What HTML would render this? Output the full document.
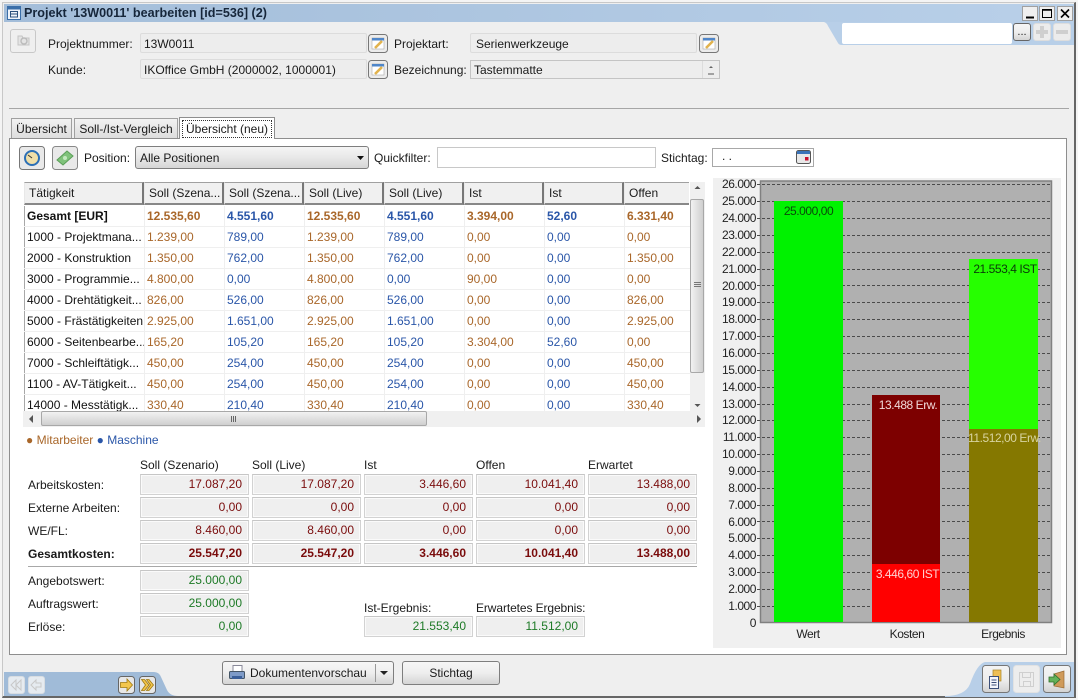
<!DOCTYPE html>
<html><head><meta charset="utf-8"><style>
html,body{margin:0;padding:0}
body{width:1078px;height:700px;overflow:hidden;position:relative;background:#efefef;font:12px "Liberation Sans",sans-serif;color:#1a1a1a}
.a,.l,.f,.b,.h,.e{position:absolute}
.l{white-space:nowrap;line-height:14px}
.f{box-sizing:border-box;background:#efefef;border:1px solid #d2d2d2;border-top-color:#c6c6c6;box-shadow:0 0 0 1px #fafafa inset;text-align:right;padding-right:6px;line-height:19px;color:#7a0c0c;white-space:nowrap}
.g{color:#1d7a26}
.bd{font-weight:bold}
.b{box-sizing:border-box;border:1px solid #7e7e7e;border-radius:3px;background:linear-gradient(#f6f6f6,#eee 50%,#d4d4d4)}
.h{box-sizing:border-box;height:23px;top:182px;background:#f0f0f0;border:1px solid #8a8a8a;border-width:1px 2px 2px 1px;border-color:#a0a0a0 #777 #888 #e8e8e8;line-height:20px;padding-left:4px;white-space:nowrap}
.e{box-sizing:border-box;background:#efefef;border:1px solid #c9c9c9}
table{border-collapse:collapse;table-layout:fixed;position:absolute}
td{height:20px;padding:0 0 0 2px;border:1px solid #efefef;border-width:0 1px 1px 0;white-space:nowrap;overflow:hidden;line-height:20px}
td:first-child{color:#111;border-left:1px solid #a8a8a8}
td.u{color:#2a56a8}
td.w{color:#a9672a}
tr.t td{font-weight:bold}
tr.t td:first-child{color:#111}
svg{display:block}
</style></head><body>

<div class="a" style="left:0;top:0;width:1078px;height:700px;background:#f4f4f4"></div>
<div class="a" style="left:2px;top:2px;right:2px;bottom:2px;background:#efefef;border:1px solid #c8c8c8;border-right:2px solid #666;border-bottom:2px solid #666;box-sizing:border-box"></div>

<!-- title -->
<div class="a" style="left:4px;top:4px;width:1070px;height:18px;background:linear-gradient(90deg,#a3bdd9,#b9d0e9)"></div>
<div class="a" style="left:842px;top:22px;width:232px;height:23px;background:#b8cfe8"></div>
<svg class="a" style="left:812px;top:22px" width="30" height="23"><path d="M10 0H12Q15 1 16 4L26 21Q27 23 30 23V0Z" fill="#b8cfe8"/></svg>
<svg class="a" style="left:7px;top:6px" width="15" height="15"><rect x="0.5" y="0.5" width="13" height="13" fill="#eef3fa" stroke="#3a6ea8"/><rect x="1" y="1" width="12" height="2.5" fill="#3a6ea8"/><rect x="3.5" y="5.5" width="7" height="5.5" fill="none" stroke="#2a4f7c"/><path d="M4 8H10" stroke="#2a4f7c"/></svg>
<div class="l bd" style="left:24px;top:6px;font-size:12.6px;color:#16263a">Projekt '13W0011' bearbeiten [id=536] (2)</div>

<svg class="a" style="left:1022px;top:6px" width="51" height="15"><rect x=".5" y=".5" width="15" height="14" fill="#efefef" stroke="#a0a0a0"/><rect x="17.500" y=".5" width="15" height="14" fill="#efefef" stroke="#a0a0a0"/><rect x="35.500" y=".5" width="15" height="14" fill="#efefef" stroke="#a0a0a0"/><path d="M4 11.500H12" stroke="#000" stroke-width="2"/><rect x="20.500" y="3.500" width="9" height="8" fill="none" stroke="#000"/><path d="M20 4H30" stroke="#000" stroke-width="1.500"/><path d="M39 3.500L47 11.500M47 3.500L39 11.500" stroke="#000" stroke-width="1.600"/></svg>

<div class="a" style="left:842px;top:23px;width:170px;height:21px;background:#fff;border-radius:2px"></div>
<div class="b" style="left:1013px;top:23px;width:18px;height:18px;text-align:center;font-size:11px;line-height:17px;color:#222;border-color:#666">...</div>
<div class="b" style="left:1033px;top:23px;width:18px;height:18px;background:#ececec;border-color:#ddd"></div>
<div class="b" style="left:1053px;top:23px;width:18px;height:18px;background:#ececec;border-color:#ddd"></div>
<div class="a" style="left:1036px;top:30px;width:12px;height:4px;background:#cfcfcf"></div>
<div class="a" style="left:1040px;top:26px;width:4px;height:12px;background:#cfcfcf"></div>
<div class="a" style="left:1056px;top:30px;width:12px;height:4px;background:#cfcfcf"></div>

<!-- header -->
<div class="a" style="box-sizing:border-box;left:10px;top:29px;width:26px;height:24px;border:1px solid #c8c8c8;border-radius:3px;background:#efefef"></div>
<svg class="a" style="left:16px;top:33px" width="15" height="15"><path d="M2 3H6L7 5H13V12H2Z" fill="#e4e4e4" stroke="#c4c4c4"/><circle cx="8" cy="8" r="3" fill="none" stroke="#bbb" stroke-width="1.400"/></svg>
<div class="l" style="left:48px;top:37px">Projektnummer:</div>
<div class="l" style="left:48px;top:63px">Kunde:</div>
<div class="l" style="left:394px;top:37px">Projektart:</div>
<div class="l" style="left:394px;top:63px">Bezeichnung:</div>
<div class="a" style="box-sizing:border-box;left:140px;top:33px;width:227px;height:20px;background:#ededed;border:1px solid #dcdcdc;border-radius:2px;padding-left:3px;line-height:20px">13W0011</div>
<div class="a" style="box-sizing:border-box;left:140px;top:59px;width:227px;height:20px;background:#ededed;border:1px solid #dcdcdc;border-radius:2px;padding-left:3px;line-height:20px">IKOffice GmbH (2000002, 1000001)</div>
<div class="a" style="box-sizing:border-box;left:470px;top:33px;width:227px;height:20px;background:#ededed;border:1px solid #dcdcdc;border-radius:2px;padding-left:5px;line-height:20px">Serienwerkzeuge</div>
<div class="a" style="box-sizing:border-box;left:470px;top:60px;width:250px;height:19px;background:#ededed;border:1px solid #c4c4c4;padding-left:3px;line-height:19px">Tastemmatte</div>
<div class="a" style="left:702px;top:61px;width:1px;height:17px;background:#dcdcdc"></div>
<svg class="a" style="left:705px;top:64px" width="12" height="13"><path d="M4 4L6 2L8 4Z" fill="#666"/><path d="M3 10H9" stroke="#888" stroke-width="1.500"/></svg>

<svg class="a" style="left:368px;top:34px" width="20" height="20"><rect x=".5" y=".5" width="19" height="18" rx="3" fill="#ececec" stroke="#777"/><rect x="4" y="4" width="12" height="11" fill="#fff" stroke="#aaa" stroke-width=".6"/><rect x="4" y="4" width="12" height="2.500" fill="#4f86c9"/><path d="M7 14L14 7" stroke="#e2b34e" stroke-width="2.600"/></svg>
<svg class="a" style="left:368px;top:60px" width="20" height="20"><rect x=".5" y=".5" width="19" height="18" rx="3" fill="#ececec" stroke="#777"/><rect x="4" y="4" width="12" height="11" fill="#fff" stroke="#aaa" stroke-width=".6"/><rect x="4" y="4" width="12" height="2.500" fill="#4f86c9"/><path d="M7 14L14 7" stroke="#e2b34e" stroke-width="2.600"/></svg>
<svg class="a" style="left:699px;top:34px" width="20" height="20"><rect x=".5" y=".5" width="19" height="18" rx="3" fill="#ececec" stroke="#777"/><rect x="4" y="4" width="12" height="11" fill="#fff" stroke="#aaa" stroke-width=".6"/><rect x="4" y="4" width="12" height="2.500" fill="#4f86c9"/><path d="M7 14L14 7" stroke="#e2b34e" stroke-width="2.600"/></svg>

<div class="a" style="left:9px;top:108px;width:1060px;height:1px;background:#a6a6a6"></div>

<!-- tabs -->
<div class="a" style="box-sizing:border-box;left:11px;top:118px;width:61px;height:21px;background:linear-gradient(#f2f2f2,#dcdcdc);border:1px solid #a0a0a0;border-bottom:0;text-align:center;line-height:21px">Übersicht</div>
<div class="a" style="box-sizing:border-box;left:74px;top:118px;width:104px;height:21px;background:linear-gradient(#f2f2f2,#dcdcdc);border:1px solid #a0a0a0;border-bottom:0;text-align:center;line-height:21px">Soll-/Ist-Vergleich</div>
<div class="a" style="box-sizing:border-box;left:9px;top:138px;width:1058px;height:517px;background:#fff;border:1px solid #8e8e8e"></div>
<div class="a" style="box-sizing:border-box;left:179px;top:117px;width:96px;height:22px;background:#fff;border:1px solid #8e8e8e;border-bottom:0;padding:2px"><div style="box-sizing:border-box;height:18px;border:1px dotted #333;text-align:center;line-height:16px">Übersicht (neu)</div></div>

<!-- toolbar -->
<svg class="a" style="left:19px;top:146px" width="26" height="24"><rect x=".5" y=".5" width="25" height="23" rx="3" fill="#e9e9e9" stroke="#777"/><circle cx="13" cy="12" r="7" fill="#f0dfa8" stroke="#2c6fb5" stroke-width="2"/><path d="M13 12L9 9" stroke="#333"/></svg>
<svg class="a" style="left:52px;top:146px" width="26" height="24"><rect x=".5" y=".5" width="25" height="23" rx="3" fill="#e9e9e9" stroke="#888"/><path d="M5 14L15 5L21 10L11 19Z" fill="#7fc27a" stroke="#5a9e58"/><circle cx="13" cy="12" r="2" fill="#c4e8bf"/></svg>
<div class="l" style="left:84px;top:151px">Position:</div>
<div class="b" style="left:135px;top:146px;width:234px;height:23px;line-height:22px;padding-left:4px;background:linear-gradient(#f5f5f5,#e8e8e8 50%,#d6d6d6)">Alle Positionen</div>
<svg class="a" style="left:356px;top:155px" width="9" height="6"><path d="M1 1H8L4.500 5Z" fill="#111"/></svg>
<div class="l" style="left:374px;top:151px">Quickfilter:</div>
<div class="a" style="box-sizing:border-box;left:437px;top:147px;width:219px;height:21px;background:#fff;border:1px solid #c8c8c8"></div>
<div class="l" style="left:661px;top:151px">Stichtag:</div>
<div class="a" style="box-sizing:border-box;left:712px;top:148px;width:102px;height:19px;background:#fff;border:1px solid #a8a8a8;padding-left:9px;line-height:15px">. .</div>
<svg class="a" style="left:796px;top:150px" width="16" height="15"><rect x=".5" y=".5" width="14" height="13" rx="2" fill="#e8e8e8" stroke="#555"/><rect x="1" y="1" width="13" height="3" fill="#3a73b8"/><rect x="9" y="7" width="3.500" height="3.500" fill="#c8102e"/></svg>

<!-- table -->
<div class="a" style="left:24px;top:181px;width:666px;height:230px;background:#fff;overflow:hidden">
<table style="left:0;top:25px;width:666px">
<colgroup><col style="width:120px"><col style="width:80px"><col style="width:80px"><col style="width:80px"><col style="width:80px"><col style="width:80px"><col style="width:80px"><col style="width:66px"></colgroup>
<tr class="t"><td>Gesamt [EUR]</td><td class="w">12.535,60</td><td class="u">4.551,60</td><td class="w">12.535,60</td><td class="u">4.551,60</td><td class="w">3.394,00</td><td class="u">52,60</td><td class="w">6.331,40</td></tr>
<tr><td>1000 - Projektmana...</td><td class="w">1.239,00</td><td class="u">789,00</td><td class="w">1.239,00</td><td class="u">789,00</td><td class="w">0,00</td><td class="u">0,00</td><td class="w">0,00</td></tr>
<tr><td>2000 - Konstruktion</td><td class="w">1.350,00</td><td class="u">762,00</td><td class="w">1.350,00</td><td class="u">762,00</td><td class="w">0,00</td><td class="u">0,00</td><td class="w">1.350,00</td></tr>
<tr><td>3000 - Programmie...</td><td class="w">4.800,00</td><td class="u">0,00</td><td class="w">4.800,00</td><td class="u">0,00</td><td class="w">90,00</td><td class="u">0,00</td><td class="w">0,00</td></tr>
<tr><td>4000 - Drehtätigkeit...</td><td class="w">826,00</td><td class="u">526,00</td><td class="w">826,00</td><td class="u">526,00</td><td class="w">0,00</td><td class="u">0,00</td><td class="w">826,00</td></tr>
<tr><td>5000 - Frästätigkeiten</td><td class="w">2.925,00</td><td class="u">1.651,00</td><td class="w">2.925,00</td><td class="u">1.651,00</td><td class="w">0,00</td><td class="u">0,00</td><td class="w">2.925,00</td></tr>
<tr><td>6000 - Seitenbearbe...</td><td class="w">165,20</td><td class="u">105,20</td><td class="w">165,20</td><td class="u">105,20</td><td class="w">3.304,00</td><td class="u">52,60</td><td class="w">0,00</td></tr>
<tr><td>7000 - Schleiftätigk...</td><td class="w">450,00</td><td class="u">254,00</td><td class="w">450,00</td><td class="u">254,00</td><td class="w">0,00</td><td class="u">0,00</td><td class="w">450,00</td></tr>
<tr><td>1100 - AV-Tätigkeit...</td><td class="w">450,00</td><td class="u">254,00</td><td class="w">450,00</td><td class="u">254,00</td><td class="w">0,00</td><td class="u">0,00</td><td class="w">450,00</td></tr>
<tr><td>14000 - Messtätigk...</td><td class="w">330,40</td><td class="u">210,40</td><td class="w">330,40</td><td class="u">210,40</td><td class="w">0,00</td><td class="u">0,00</td><td class="w">330,40</td></tr>
</table>
</div>
<div class="h" style="left:24px;width:120px">Tätigkeit</div>
<div class="h" style="left:144px;width:80px">Soll (Szena...</div>
<div class="h" style="left:224px;width:80px">Soll (Szena...</div>
<div class="h" style="left:304px;width:80px">Soll (Live)</div>
<div class="h" style="left:384px;width:80px">Soll (Live)</div>
<div class="h" style="left:464px;width:80px">Ist</div>
<div class="h" style="left:544px;width:80px">Ist</div>
<div class="h" style="left:624px;width:65px;border-right:0">Offen</div>

<!-- scrollbars -->
<div class="a" style="left:690px;top:182px;width:15px;height:229px;background:#f0f0f0"></div>
<div class="a" style="box-sizing:border-box;left:690px;top:199px;width:14px;height:174px;background:linear-gradient(90deg,#f2f2f2,#cfcfcf);border:1px solid #a8a8a8;border-radius:2px"></div>
<svg class="a" style="left:690px;top:182px" width="15" height="229"><path d="M4.500 7L7.500 4L10.500 7Z" fill="#555"/><path d="M4.500 222L7.500 225L10.500 222Z" fill="#555"/><path d="M4 100.500H11M4 102.500H11M4 104.500H11" stroke="#777"/></svg>
<div class="a" style="left:23px;top:411px;width:682px;height:16px;background:#f0f0f0"></div>
<div class="a" style="box-sizing:border-box;left:41px;top:411px;width:386px;height:15px;background:linear-gradient(#f2f2f2,#cfcfcf);border:1px solid #a8a8a8;border-radius:2px"></div>
<svg class="a" style="left:23px;top:411px" width="682" height="16"><path d="M10 4L6 8L10 12Z" fill="#555"/><path d="M674 4L678 8L674 12Z" fill="#555"/><path d="M208.500 5V11M210.500 5V11M212.500 5V11" stroke="#666"/></svg>

<div class="l" style="left:26px;top:433px;color:#a9672a">● Mitarbeiter <span style="color:#2a56a8">● Maschine</span></div>

<!-- cost grid -->
<div class="l" style="left:140px;top:458px">Soll (Szenario)</div>
<div class="l" style="left:252px;top:458px">Soll (Live)</div>
<div class="l" style="left:364px;top:458px">Ist</div>
<div class="l" style="left:476px;top:458px">Offen</div>
<div class="l" style="left:588px;top:458px">Erwartet</div>

<div class="l" style="left:28px;top:478px">Arbeitskosten:</div>
<div class="l" style="left:28px;top:501px">Externe Arbeiten:</div>
<div class="l" style="left:28px;top:524px">WE/FL:</div>
<div class="l bd" style="left:28px;top:547px">Gesamtkosten:</div>

<div class="f" style="left:140px;top:474px;width:109px;height:21px">17.087,20</div>
<div class="f" style="left:252px;top:474px;width:109px;height:21px">17.087,20</div>
<div class="f" style="left:364px;top:474px;width:109px;height:21px">3.446,60</div>
<div class="f" style="left:476px;top:474px;width:109px;height:21px">10.041,40</div>
<div class="f" style="left:588px;top:474px;width:109px;height:21px">13.488,00</div>

<div class="f" style="left:140px;top:497px;width:109px;height:21px">0,00</div>
<div class="f" style="left:252px;top:497px;width:109px;height:21px">0,00</div>
<div class="f" style="left:364px;top:497px;width:109px;height:21px">0,00</div>
<div class="f" style="left:476px;top:497px;width:109px;height:21px">0,00</div>
<div class="f" style="left:588px;top:497px;width:109px;height:21px">0,00</div>

<div class="f" style="left:140px;top:520px;width:109px;height:21px">8.460,00</div>
<div class="f" style="left:252px;top:520px;width:109px;height:21px">8.460,00</div>
<div class="f" style="left:364px;top:520px;width:109px;height:21px">0,00</div>
<div class="f" style="left:476px;top:520px;width:109px;height:21px">0,00</div>
<div class="f" style="left:588px;top:520px;width:109px;height:21px">0,00</div>

<div class="f bd" style="left:140px;top:543px;width:109px;height:21px">25.547,20</div>
<div class="f bd" style="left:252px;top:543px;width:109px;height:21px">25.547,20</div>
<div class="f bd" style="left:364px;top:543px;width:109px;height:21px">3.446,60</div>
<div class="f bd" style="left:476px;top:543px;width:109px;height:21px">10.041,40</div>
<div class="f bd" style="left:588px;top:543px;width:109px;height:21px">13.488,00</div>

<div class="a" style="left:28px;top:566px;width:669px;height:1px;background:#a8a8a8"></div>

<div class="l" style="left:28px;top:574px">Angebotswert:</div>
<div class="l" style="left:28px;top:597px">Auftragswert:</div>
<div class="l" style="left:28px;top:620px">Erlöse:</div>
<div class="f g" style="left:140px;top:570px;width:109px;height:21px">25.000,00</div>
<div class="f g" style="left:140px;top:593px;width:109px;height:21px">25.000,00</div>
<div class="f g" style="left:140px;top:616px;width:109px;height:21px">0,00</div>
<div class="l" style="left:364px;top:601px">Ist-Ergebnis:</div>
<div class="l" style="left:476px;top:601px;letter-spacing:-.1px">Erwartetes Ergebnis:</div>
<div class="f g" style="left:364px;top:616px;width:109px;height:21px">21.553,40</div>
<div class="f g" style="left:476px;top:616px;width:109px;height:21px">11.512,00</div>

<!-- chart -->
<svg class="a" style="left:713px;top:178px" width="348" height="470" font-family="Liberation Sans" font-size="12">
<rect width="348" height="470" fill="#f0f0f0"/>
<rect x="47.500" y="3" width="291" height="441.500" fill="#b0b0b0" stroke="#808080" stroke-width="1.500"/>
<g stroke="#4a4a4a" stroke-dasharray="3 2" stroke-width="1">
<path d="M44 6.500H338M44 23.500H338M44 40.500H338M44 57.500H338M44 74.500H338M44 91.500H338M44 107.500H338M44 124.500H338M44 141.500H338M44 158.500H338M44 175.500H338M44 192.500H338M44 209.500H338M44 226.500H338M44 242.500H338M44 259.500H338M44 276.500H338M44 293.500H338M44 310.500H338M44 327.500H338M44 343.500H338M44 360.500H338M44 377.500H338M44 394.500H338M44 411.500H338M44 428.500H338"/>
</g>
<rect x="61" y="23" width="69" height="421" fill="#00f200"/>
<rect x="159" y="217" width="68" height="169" fill="#7d0000"/>
<rect x="159" y="386" width="68" height="58" fill="#ff0000"/>
<rect x="256" y="81" width="69" height="170" fill="#26ff00"/>
<rect x="256" y="251" width="69" height="193" fill="#857800"/>
<g text-anchor="end" fill="#222" letter-spacing="-.45">
<text x="43" y="10">26.000</text><text x="43" y="27">25.000</text><text x="43" y="44">24.000</text><text x="43" y="61">23.000</text><text x="43" y="78">22.000</text><text x="43" y="95">21.000</text><text x="43" y="112">20.000</text><text x="43" y="128">19.000</text><text x="43" y="145">18.000</text><text x="43" y="162">17.000</text><text x="43" y="179">16.000</text><text x="43" y="196">15.000</text><text x="43" y="213">14.000</text><text x="43" y="230">13.000</text><text x="43" y="246">12.000</text><text x="43" y="263">11.000</text><text x="43" y="280">10.000</text><text x="43" y="297">9.000</text><text x="43" y="314">8.000</text><text x="43" y="331">7.000</text><text x="43" y="348">6.000</text><text x="43" y="364">5.000</text><text x="43" y="381">4.000</text><text x="43" y="398">3.000</text><text x="43" y="415">2.000</text><text x="43" y="432">1.000</text><text x="43" y="449">0</text>
</g>
<g text-anchor="middle" fill="#222" letter-spacing="-.45">
<text x="95" y="460">Wert</text><text x="194" y="460">Kosten</text><text x="290" y="460">Ergebnis</text>
<text x="95.500" y="37" fill="#0a4a0a">25.000,00</text>
<text x="195" y="231" fill="#f0d8d8">13.488 Erw.</text>
<text x="194.500" y="400" fill="#ffd0d0">3.446,60 IST</text>
<text x="292" y="95" fill="#0a3a0a">21.553,4 IST</text>
<text x="291.500" y="264" fill="#d8d4a0">11.512,00 Erw.</text>
</g>
</svg>

<!-- bottom left tab -->
<svg class="a" style="left:4px;top:672px" width="174" height="25"><path d="M0 0H150Q155 0 157 5L163 18Q166 24 174 24H0Z" fill="#a0bbd8"/></svg>
<div class="a" style="box-sizing:border-box;left:8px;top:676px;width:17px;height:18px;background:#e6ebf0;border:1px solid #d8dde2;border-radius:3px"></div>
<div class="a" style="box-sizing:border-box;left:28px;top:676px;width:17px;height:18px;background:#e6ebf0;border:1px solid #d8dde2;border-radius:3px"></div>
<svg class="a" style="left:8px;top:676px" width="150" height="18"><path d="M8 4L3 9L8 14ZM13 4L8 9L13 14Z" fill="none" stroke="#c8c8c8"/><path d="M28 4L23 9L28 14V11H33V7H28Z" fill="none" stroke="#c8c8c8"/><rect x="110.500" y=".5" width="16" height="17" rx="3" fill="#e7e7e7" stroke="#666"/><rect x="131.500" y=".5" width="16" height="17" rx="3" fill="#e7e7e7" stroke="#666"/><path d="M112.500 6.500H119V3L124.500 9L119 15V11.500H112.500Z" fill="#f3c64c" stroke="#a07a10" stroke-width=".8"/><path d="M133.500 3.500H136.500L141 9L136.500 14.500H133.500L137.500 9Z" fill="#f3c64c" stroke="#a07a10" stroke-width=".8"/><path d="M138.500 3.500H141L145.500 9L141 14.500H138.500L142.500 9Z" fill="#f3c64c" stroke="#a07a10" stroke-width=".8"/></svg>

<!-- bottom buttons -->
<div class="b" style="left:222px;top:661px;width:172px;height:24px;line-height:22px;padding-left:27px">Dokumentenvorschau</div>
<svg class="a" style="left:228px;top:664px" width="18" height="18"><rect x="5" y="1.500" width="9" height="6" fill="#fff" stroke="#889"/><rect x="1.500" y="7.500" width="15" height="7" rx="1" fill="#7e9bc8" stroke="#456"/><rect x="4" y="12" width="10" height="3" fill="#3b5f99"/></svg>
<div class="a" style="left:375px;top:664px;width:1px;height:18px;background:#999"></div>
<svg class="a" style="left:379px;top:670px" width="10" height="6"><path d="M1 1H9L5 5Z" fill="#222"/></svg>
<div class="b" style="left:402px;top:661px;width:98px;height:24px;text-align:center;line-height:22px">Stichtag</div>

<!-- bottom right tab -->
<svg class="a" style="left:945px;top:662px" width="129" height="35"><path d="M0 34Q20 34 25 22Q32 2 40 0H129V35H0Z" fill="#b8cfe8"/></svg>
<svg class="a" style="left:982px;top:665px" width="89" height="29">
<defs><linearGradient id="bg" x1="0" y1="0" x2="0" y2="1"><stop offset="0" stop-color="#f4f4f4"/><stop offset=".55" stop-color="#ececec"/><stop offset="1" stop-color="#d2d2d2"/></linearGradient></defs>
<rect x=".5" y=".5" width="27" height="27" rx="3" fill="url(#bg)" stroke="#777"/>
<rect x="11" y="5" width="8" height="11" fill="#eebf55" stroke="#a98423" stroke-width=".7"/><rect x="7.500" y="11.500" width="9" height="12" fill="#f4f6fb" stroke="#3c4f78"/><path d="M9.500 15H14.500M9.500 17.500H14.500M9.500 20H14.500" stroke="#3c4f78"/>
<rect x="31.500" y=".5" width="26" height="27" rx="3" fill="#ededed" stroke="#e2e2e2"/>
<path d="M37.500 7.500H51.500V21.500H37.500ZM40.500 7.500V12.500H48.500V7.500M41.500 21.500V16.500H48.500V21.500" fill="none" stroke="#cfcfcf"/>
<rect x="61.500" y=".5" width="27" height="27" rx="3" fill="url(#bg)" stroke="#777"/>
<path d="M72 9L82 6V23L72 21Z" fill="#cf9a5a" stroke="#9a6b35" stroke-width=".7"/><path d="M67 12H72V9L78 14.500L72 20V17H67Z" fill="#63b25a" stroke="#2f6e2a" stroke-width=".8"/>
</svg>
</body></html>
